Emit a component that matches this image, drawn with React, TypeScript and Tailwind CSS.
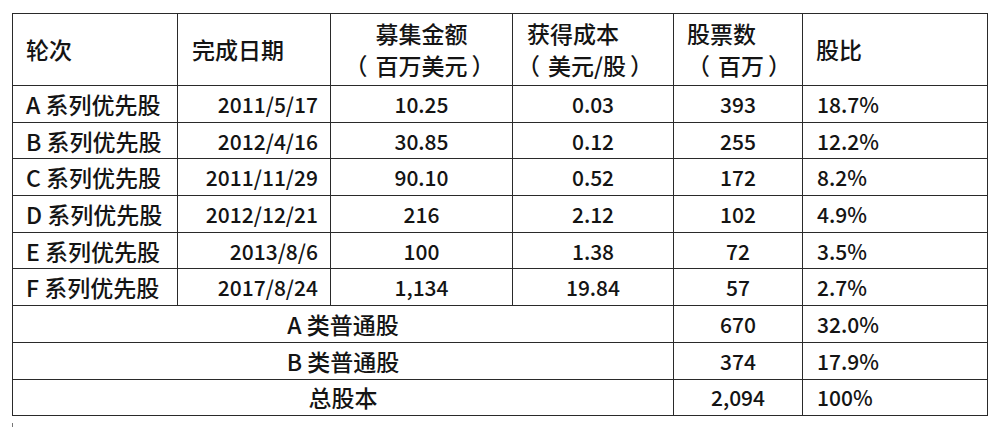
import React from "react";

type Row = {
  round: string;
  date: string;
  raised: string;
  cost: string;
  shares: string;
  pct: string;
};

const rows: Row[] = [
  { round: "A", date: "2011/5/17", raised: "10.25", cost: "0.03", shares: "393", pct: "18.7%" },
  { round: "B", date: "2012/4/16", raised: "30.85", cost: "0.12", shares: "255", pct: "12.2%" },
  { round: "C", date: "2011/11/29", raised: "90.10", cost: "0.52", shares: "172", pct: "8.2%" },
  { round: "D", date: "2012/12/21", raised: "216", cost: "2.12", shares: "102", pct: "4.9%" },
  { round: "E", date: "2013/8/6", raised: "100", cost: "1.38", shares: "72", pct: "3.5%" },
  { round: "F", date: "2017/8/24", raised: "1,134", cost: "19.84", shares: "57", pct: "2.7%" },
];

const totals = [
  { label: "A 类普通股", shares: "670", pct: "32.0%" },
  { label: "B 类普通股", shares: "374", pct: "17.9%" },
  { label: "总股本", shares: "2,094", pct: "100%" },
];

const cell = "border border-[#2a2a2a] h-[36.7px] p-0 align-middle";
const head = "border border-[#2a2a2a] font-medium pb-[2px]";

// full-width brackets, glyph sitting near the middle of an em box
function Paren({ children }: { children: React.ReactNode }) {
  return (
    <>
      <span className="inline-block w-[23px] text-left">
        <span className="-ml-[8px]">（</span>
      </span>
      {children}
      <span className="inline-block w-[23px] text-left pl-[4px]">）</span>
    </>
  );
}

export default function App() {
  return (
    <div
      className="w-[1000px] h-[427px] bg-white text-[#141414] text-[23px] leading-[32px] font-medium overflow-hidden"
      style={{ fontFamily: '"Noto Sans CJK SC", "Noto Sans", sans-serif' }}
    >
      <div className="pt-[13px] pl-[12px]">
        <table className="table-fixed border-collapse w-[975px]">
          <colgroup>
            <col className="w-[165px]" />
            <col className="w-[153px]" />
            <col className="w-[182px]" />
            <col className="w-[161px]" />
            <col className="w-[129px]" />
            <col className="w-[185px]" />
          </colgroup>
          <thead>
            <tr className="h-[72px]">
              <th className={`${head} text-left pl-[13px]`}>轮次</th>
              <th className={`${head} text-left pl-[14px]`}>完成日期</th>
              <th className={`${head} text-center`}>
                募集金额
                <br />
                <Paren>百万美元</Paren>
              </th>
              <th className={`${head} text-left pl-[14px]`}>
                获得成本
                <br />
                <span className="-ml-[2px]">
                  <Paren>美元/股</Paren>
                </span>
              </th>
              <th className={`${head} text-left pl-[13px]`}>
                股票数
                <br />
                <span className="ml-[8px]">
                  <Paren>百万</Paren>
                </span>
              </th>
              <th className={`${head} text-left pl-[13px]`}>股比</th>
            </tr>
          </thead>
          <tbody className="text-[21px]">
            {rows.map((r) => (
              <tr key={r.round}>
                <td className={`${cell} text-left pl-[13px] text-[23px]`}>{r.round} 系列优先股</td>
                <td className={`${cell} text-right pr-[12px]`}>{r.date}</td>
                <td className={`${cell} text-center`}>{r.raised}</td>
                <td className={`${cell} text-center`}>{r.cost}</td>
                <td className={`${cell} text-center`}>{r.shares}</td>
                <td className={`${cell} text-left pl-[14px]`}>{r.pct}</td>
              </tr>
            ))}
            {totals.map((t) => (
              <tr key={t.label}>
                <td colSpan={4} className={`${cell} text-center text-[23px]`}>
                  {t.label}
                </td>
                <td className={`${cell} text-center`}>{t.shares}</td>
                <td className={`${cell} text-left pl-[14px]`}>{t.pct}</td>
              </tr>
            ))}
          </tbody>
        </table>
        <div className="mt-[7px] w-px h-[5px] bg-[#777]" />
      </div>
    </div>
  );
}
